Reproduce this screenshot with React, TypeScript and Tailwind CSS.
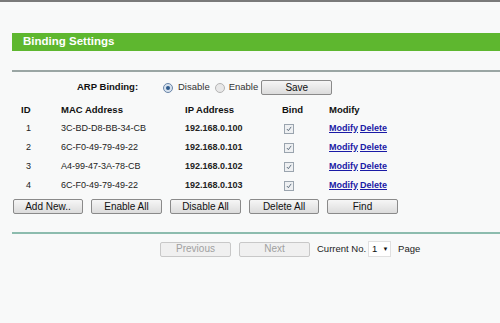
import React from "react";

const rows = [
  { id: 1, mac: "3C-BD-D8-BB-34-CB", ip: "192.168.0.100" },
  { id: 2, mac: "6C-F0-49-79-49-22", ip: "192.168.0.101" },
  { id: 3, mac: "A4-99-47-3A-78-CB", ip: "192.168.0.102" },
  { id: 4, mac: "6C-F0-49-79-49-22", ip: "192.168.0.103" },
];

function Btn({ label, w = "w-[71px]", disabled = false }: { label: string; w?: string; disabled?: boolean }) {
  return (
    <div
      className={`${w} h-[15px] flex items-center justify-center border rounded-[2px] text-[10px] leading-none ${
        disabled
          ? "border-[#c8c8c8] bg-[#f0f0f0] text-[#a0a0a0]"
          : "border-[#8a8a8a] bg-gradient-to-b from-[#f6f6f6] to-[#dcdcdc] text-[#111]"
      }`}
    >
      {label}
    </div>
  );
}

function Check() {
  return (
    <div className="w-[10px] h-[10px] border border-[#9aa4ae] bg-[#eef0f2] flex items-center justify-center">
      <svg width="6" height="6" viewBox="0 0 7 7">
        <path d="M1 3.5 L2.8 5.5 L6 1" stroke="#5a6a7a" strokeWidth="1.1" fill="none" />
      </svg>
    </div>
  );
}

export default function App() {
  return (
    <div
      className="w-[500px] h-[323px] bg-[#f8f9f9] overflow-hidden text-[#111]"
      style={{ fontFamily: '"Liberation Sans", Arial, sans-serif' }}
    >
      <div className="h-[2px] bg-[#7a7a7a]" />
      <div className="pl-[12px] pt-[31px]">
        <div className="h-[18px] bg-[#5eb72f] flex items-center pl-[11px]">
          <span className="text-white font-bold text-[11.5px] leading-none">Binding Settings</span>
        </div>
        <div className="mt-[19px] h-[2px] bg-[#9aa6a4]" />

        {/* ARP Binding row */}
        <div className="flex items-center h-[15px] mt-[8px] text-[9.5px]">
          <span className="ml-[65px] font-bold w-[86px]">ARP Binding:</span>
          <span className="w-[10px] h-[10px] rounded-full border border-[#6b86a8] bg-[#d7e2ee] flex items-center justify-center">
            <span className="w-[4px] h-[4px] rounded-full bg-[#2d5a8c]" />
          </span>
          <span className="ml-[5px] text-[#333]">Disable</span>
          <span className="ml-[5px] w-[10px] h-[10px] rounded-full border border-[#b4b4b4] bg-[#e8e8e8]" />
          <span className="ml-[4px] text-[#333]">Enable</span>
          <div className="ml-[3px]">
            <Btn label="Save" />
          </div>
        </div>

        {/* header */}
        <div className="flex items-center h-[14px] mt-[8px] text-[9.5px] font-bold">
          <span className="w-[49px] pl-[9px]">ID</span>
          <span className="w-[124px]">MAC Address</span>
          <span className="w-[97px]">IP Address</span>
          <span className="w-[47px]">Bind</span>
          <span>Modify</span>
        </div>

        <div className="mt-[2px]">
          {rows.map((r) => (
            <div key={r.id} className="flex items-center h-[19px] text-[9px]">
              <span className="w-[49px] pl-[14px] text-[#222]">{r.id}</span>
              <span className="w-[124px] text-[#222]">{r.mac}</span>
              <span className="w-[97px] font-bold text-[#222]">{r.ip}</span>
              <span className="w-[47px] pl-[2px]">
                <Check />
              </span>
              <span className="font-bold text-[#1a1aa6] underline">Modify</span>
              <span className="ml-[2px] font-bold text-[#1a1aa6] underline">Delete</span>
            </div>
          ))}
        </div>

        <div className="flex gap-[8px] mt-[4px] ml-[1px]">
          <Btn label="Add New.." w="w-[70px]" />
          <Btn label="Enable All" />
          <Btn label="Disable All" />
          <Btn label="Delete All" w="w-[70px]" />
          <Btn label="Find" />
        </div>

        <div className="mt-[18px] h-[2px] bg-[#8cbcae]" />

        <div className="flex items-center mt-[7px] text-[9.5px]">
          <div className="ml-[148px]">
            <Btn label="Previous" disabled />
          </div>
          <div className="ml-[8px]">
            <Btn label="Next" disabled />
          </div>
          <span className="ml-[7px] text-[#222]">Current No.</span>
          <div className="ml-[2px] w-[23px] h-[16px] bg-white border border-[#e0e0e0] flex items-center pl-[3px] gap-[5px]">
            <span>1</span>
            <span className="text-[6px]">▼</span>
          </div>
          <span className="ml-[7px] text-[#222]">Page</span>
        </div>
      </div>
    </div>
  );
}
